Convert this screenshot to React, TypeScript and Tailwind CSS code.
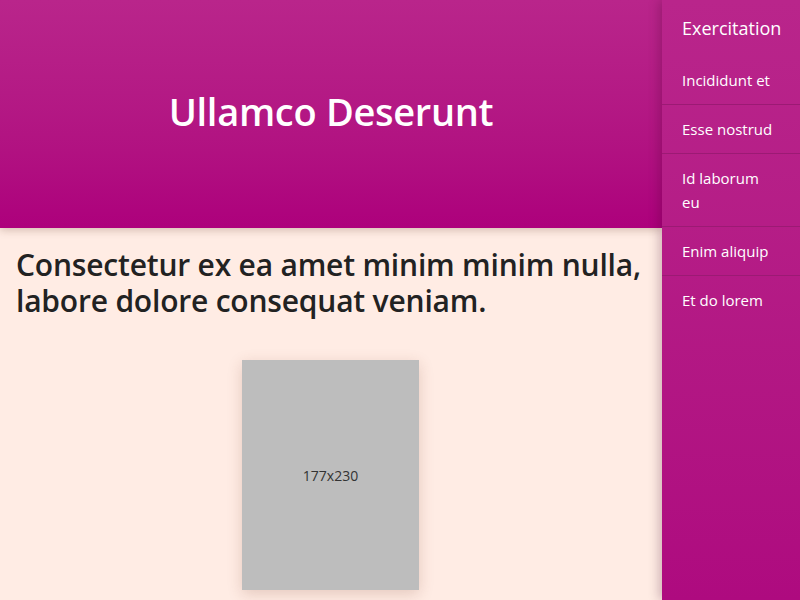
import React from 'react';

const links = ['Incididunt et', 'Esse nostrud', 'Id laborum eu', 'Enim aliquip', 'Et do lorem'];

export default function App() {
  return (
    <div
      className="flex h-[600px] w-[800px] overflow-hidden bg-[#ffece4] text-[#222]"
      style={{ fontFamily: '"Open Sans", "Noto Sans", sans-serif' }}
    >
      {/* Main column */}
      <div className="flex flex-1 flex-col">
        <header className="relative z-10 flex h-[228px] shrink-0 items-center justify-center bg-gradient-to-b from-[#b9258b] to-[#ad007c] pb-[6px] shadow-[0_2px_8px_rgba(80,40,20,0.25)]">
          <h1 className="text-[38px] font-semibold tracking-[-0.3px] text-white">Ullamco Deserunt</h1>
        </header>

        <main className="flex flex-col px-4 pt-[19px]">
          <h2 className="text-[30px] leading-[36px] font-semibold tracking-[-0.2px] text-[#222]">
            Consectetur ex ea amet minim minim nulla, labore dolore consequat veniam.
          </h2>
          <div className="mt-[41px] flex justify-center pr-px">
            <div className="flex h-[230px] w-[177px] items-center justify-center bg-[#bdbdbd] text-[14px] text-[#333] shadow-[0_4px_14px_rgba(120,60,40,0.2)]">
              177x230
            </div>
          </div>
        </main>
      </div>

      {/* Sidebar */}
      <aside className="relative z-20 flex w-[138px] shrink-0 flex-col bg-gradient-to-b from-[#b9258b] to-[#ae0a7f] text-white shadow-[-3px_0_10px_rgba(60,0,40,0.25)]">
        <div className="flex h-[56px] items-center px-5 text-[18px]">Exercitation</div>
        {links.map((l) => (
          <a
            key={l}
            href="#"
            className="block border-b border-[#9c1a74] py-3 pr-[25px] pl-5 text-[15px] leading-6 last:border-b-0"
          >
            {l}
          </a>
        ))}
      </aside>
    </div>
  );
}
